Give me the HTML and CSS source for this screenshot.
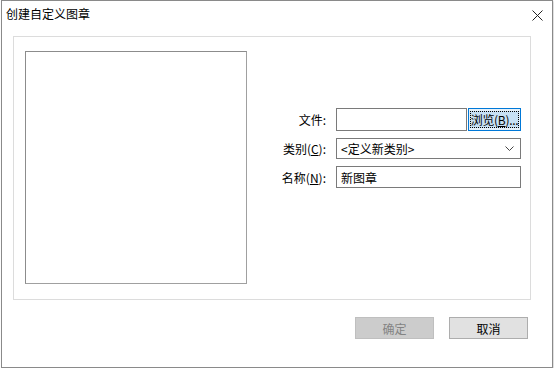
FILE: index.html
```html
<!DOCTYPE html>
<html lang="zh-CN">
<head>
<meta charset="utf-8">
<title>创建自定义图章</title>
<link rel="stylesheet" href="styles.css">
</head>
<body>
<div class="window">
  <div class="titlebar">
    <span class="title">创建自定义图章</span>
    <svg class="close" width="11" height="11" viewBox="0 0 11 11"><path d="M0.5 0.5 L10.5 10.5 M10.5 0.5 L0.5 10.5" stroke="#222" stroke-width="1" fill="none"/></svg>
  </div>
  <div class="content">
    <div class="group">
      <div class="preview"></div>
      <div class="form">
        <label class="lbl">文件:</label>
        <div class="filerow">
          <div class="input file"></div>
          <div class="browse"><span class="focus">浏览(<u>B</u>)...</span></div>
        </div>
        <label class="lbl">类别(<u>C</u>):</label>
        <div class="combo">
          <span>&lt;定义新类别&gt;</span>
          <svg width="9" height="5" viewBox="0 0 9 5"><path d="M0.5 0.5 L4.5 4.5 L8.5 0.5" stroke="#444" stroke-width="1" fill="none"/></svg>
        </div>
        <label class="lbl">名称(<u>N</u>):</label>
        <div class="input name">新图章</div>
      </div>
    </div>
    <div class="buttons">
      <div class="btn disabled">确定</div>
      <div class="btn">取消</div>
    </div>
  </div>
</div>
</body>
</html>
```
FILE: styles.css
```css
* { box-sizing: border-box; }
html, body { margin: 0; padding: 0; background: #fff; }
body {
  font-family: "Noto Sans CJK SC", "Microsoft YaHei", "Noto Sans", sans-serif;
  font-size: 12px;
  color: #000;
}
.window {
  margin-left: 1px;
  width: 552px;
  height: 368px;
  border: 1px solid #8a8a8a;
  box-shadow: 1px 1px 2px rgba(0,0,0,0.18);
  background: #fff;
}
.titlebar {
  height: 29px;
  display: flex;
  align-items: center;
  justify-content: space-between;
  padding: 0 9px 5px 4px;
}
.title { font-size: 12px; color: #000; }
.close { display: block; margin-top: 4px; }
.content {
  padding: 6px 21px 0 11px;
}
.group {
  height: 264px;
  border: 1px solid #dcdcdc;
  display: flex;
  align-items: flex-start;
}
.preview {
  margin: 14px 0 0 11px;
  width: 222px;
  height: 233px;
  border: 1px solid #a0a0a0;
  border-top-color: #8c8c8c;
  border-left-color: #8c8c8c;
  background: #fff;
}
.form {
  margin: 71px 0 0 23px;
  display: grid;
  grid-template-columns: 56px 185px;
  grid-template-rows: 23px 21px 22px;
  column-gap: 10px;
  row-gap: 7px;
}
.lbl {
  justify-self: end;
  align-self: center;
  white-space: nowrap;
}
u { text-decoration: underline; text-underline-offset: 1px; }
.filerow { display: flex; gap: 1px; }
.input {
  border: 1px solid #7a7a7a;
  background: #fff;
  height: 100%;
  display: flex;
  align-items: center;
  padding-left: 4px;
}
.file { width: 131px; }
.browse {
  width: 53px;
  height: 23px;
  border: 1px solid #0078d7;
  background: #e5f1fb;
  display: flex;
  align-items: center;
  justify-content: center;
  padding: 2px 1px;
}
.focus {
  display: flex;
  align-items: center;
  justify-content: center;
  width: 100%;
  height: 100%;
  outline: 1px dotted #000;
  outline-offset: -1px;
  background: #c7e0f4;
  white-space: nowrap;
  letter-spacing: -0.3px;
}
.combo {
  border: 1px solid #7a7a7a;
  display: flex;
  align-items: center;
  justify-content: space-between;
  padding: 0 6px 0 4px;
}
.combo svg { display: block; }
.buttons {
  margin-top: 17px;
  display: flex;
  justify-content: flex-end;
  gap: 15px;
  padding-right: 3px;
}
.btn {
  width: 79px;
  height: 22px;
  border: 1px solid #adadad;
  background: #e1e1e1;
  display: flex;
  align-items: center;
  justify-content: center;
}
.btn.disabled {
  border-color: #bfbfbf;
  background: #cccccc;
  color: #838383;
}
```
